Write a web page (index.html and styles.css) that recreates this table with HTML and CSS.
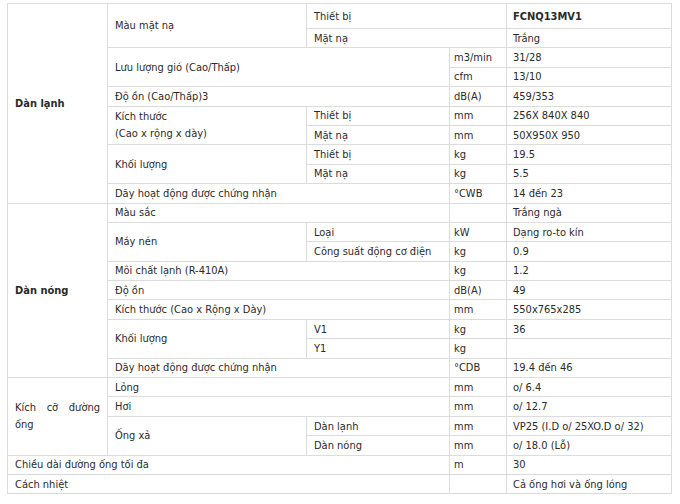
FILE: index.html
```html
<!DOCTYPE html>
<html lang="vi">
<head>
<meta charset="utf-8">
<link rel="stylesheet" href="styles.css">
</head>
<body>
<div class="wrap">
<table class="spec">
<colgroup>
<col class="c1"><col class="c2"><col class="c3"><col class="c4"><col class="c5">
</colgroup>
<tbody>
<tr class="first"><td rowspan="10" class="grp b">Dàn lạnh</td><td rowspan="2">Màu mặt nạ</td><td colspan="2">Thiết bị</td><td class="v b">FCNQ13MV1</td></tr>
<tr><td colspan="2">Mặt nạ</td><td class="v">Trắng</td></tr>
<tr><td colspan="2" rowspan="2">Lưu lượng gió (Cao/Thấp)</td><td class="u">m3/min</td><td class="v">31/28</td></tr>
<tr><td class="u">cfm</td><td class="v">13/10</td></tr>
<tr><td colspan="2">Độ ồn (Cao/Thấp)3</td><td class="u">dB(A)</td><td class="v">459/353</td></tr>
<tr><td rowspan="2" class="two">Kích thước<br>(Cao x rộng x dày)</td><td>Thiết bị</td><td class="u">mm</td><td class="v">256X 840X 840</td></tr>
<tr><td>Mặt nạ</td><td class="u">mm</td><td class="v">50X950X 950</td></tr>
<tr><td rowspan="2">Khối lượng</td><td>Thiết bị</td><td class="u">kg</td><td class="v">19.5</td></tr>
<tr><td>Mặt nạ</td><td class="u">kg</td><td class="v">5.5</td></tr>
<tr><td colspan="2">Dãy hoạt động được chứng nhận</td><td class="u">°CWB</td><td class="v">14 đến 23</td></tr>
<tr><td rowspan="9" class="grp b">Dàn nóng</td><td colspan="2">Màu sắc</td><td class="u"></td><td class="v">Trắng ngà</td></tr>
<tr><td rowspan="2">Máy nén</td><td>Loại</td><td class="u">kW</td><td class="v">Dạng ro-to kín</td></tr>
<tr><td>Công suất động cơ điện</td><td class="u">kg</td><td class="v">0.9</td></tr>
<tr><td colspan="2">Môi chất lạnh (R-410A)</td><td class="u">kg</td><td class="v">1.2</td></tr>
<tr><td colspan="2">Độ ồn</td><td class="u">dB(A)</td><td class="v">49</td></tr>
<tr><td colspan="2">Kích thước (Cao x Rộng x Dày)</td><td class="u">mm</td><td class="v">550x765x285</td></tr>
<tr><td rowspan="2">Khối lượng</td><td>V1</td><td class="u">kg</td><td class="v">36</td></tr>
<tr><td>Y1</td><td class="u">kg</td><td class="v"></td></tr>
<tr><td colspan="2">Dãy hoạt động được chứng nhận</td><td class="u">°CDB</td><td class="v">19.4 đến 46</td></tr>
<tr><td rowspan="4" class="grp just">Kích cỡ đường ống</td><td colspan="2">Lỏng</td><td class="u">mm</td><td class="v">o/ 6.4</td></tr>
<tr><td colspan="2">Hơi</td><td class="u">mm</td><td class="v">o/ 12.7</td></tr>
<tr><td rowspan="2">Ống xả</td><td>Dàn lạnh</td><td class="u">mm</td><td class="v">VP25 (I.D o/ 25XO.D o/ 32)</td></tr>
<tr><td>Dàn nóng</td><td class="u">mm</td><td class="v">o/ 18.0 (Lỗ)</td></tr>
<tr><td colspan="3">Chiều dài đường ống tối đa</td><td class="u">m</td><td class="v">30</td></tr>
<tr><td colspan="3">Cách nhiệt</td><td class="u"></td><td class="v">Cả ống hơi và ống lóng</td></tr>
</tbody>
</table>
</div>
</body>
</html>
```
FILE: styles.css
```css
html, body {
  margin: 0;
  padding: 0;
  background: #fff;
}
.wrap {
  padding: 3px 0 0 7px;
}
.spec {
  border-collapse: collapse;
  table-layout: fixed;
  width: 664px;
  font-family: "DejaVu Sans Condensed", "DejaVu Sans", sans-serif;
  font-size: 11px;
  color: #2a2a2a;
}
.c1 { width: 100px; }
.c2 { width: 199px; }
.c3 { width: 143px; }
.c4 { width: 57px; }
.c5 { width: 165px; }
.spec td {
  border: 1px solid #dcdcdc;
  padding: 0 7px;
  height: 19.4px;
  box-sizing: border-box;
  vertical-align: middle;
  line-height: 17px;
  white-space: nowrap;
}
.spec tr.first td {
  height: 25px;
}
.spec td.u {
  padding-left: 4px;
}
.spec td.v {
  padding-left: 6px;
}
.spec td.b {
  font-weight: bold;
}
.spec td.grp {
  padding-left: 7px;
}
.spec td.just {
  white-space: normal;
  text-align: justify;
  text-align-last: left;
}
```
